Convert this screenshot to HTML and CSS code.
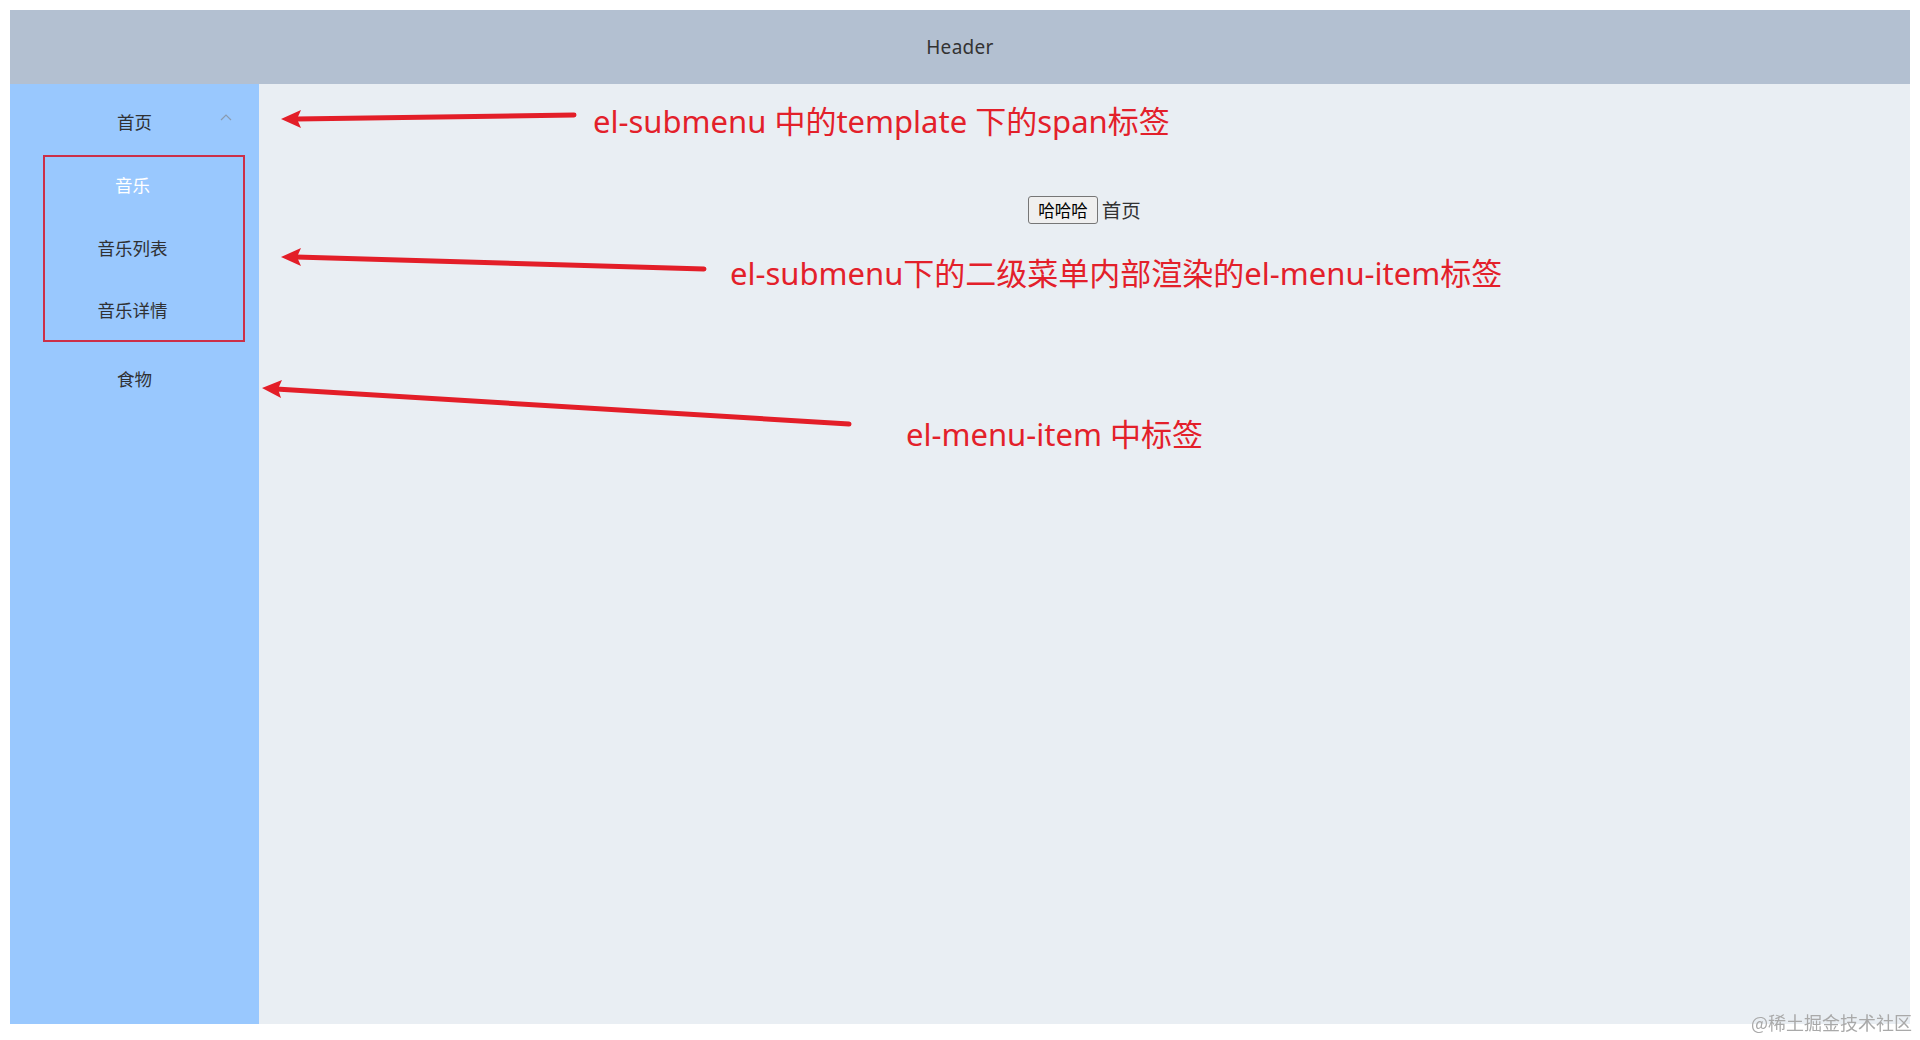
FILE: index.html
```html
<!DOCTYPE html>
<html lang="zh-CN">
<head>
<meta charset="utf-8">
<title>Element layout</title>
<link rel="stylesheet" href="styles.css">
</head>
<body>
<section class="container">
  <header class="header">Header</header>
  <section class="body">
    <aside class="aside">
      <ul class="menu">
        <li class="submenu">
          <div class="submenu-title">
            <span>首页</span>
            <svg class="arrow" width="12" height="8" viewBox="0 0 12 8"><path d="M1 7 L6 2 L11 7" fill="none" stroke="#8a9bb0" stroke-width="1.2"/></svg>
          </div>
          <ul class="submenu-list">
            <li class="item active">音乐</li>
            <li class="item">音乐列表</li>
            <li class="item">音乐详情</li>
          </ul>
        </li>
        <li class="top-item">食物</li>
      </ul>
    </aside>
    <main class="main">
      <button class="btn">哈哈哈</button> <span class="main-text">首页</span>
    </main>
  </section>
</section>

<div class="overlay">
  <svg class="arrows" width="1920" height="1040" viewBox="0 0 1920 1040">
    <g stroke="#e31e28" stroke-width="5" stroke-linecap="round" fill="none">
      <line x1="574" y1="115" x2="296" y2="119"/>
      <line x1="704" y1="269" x2="296" y2="257"/>
      <line x1="849" y1="424" x2="276" y2="389"/>
    </g>
    <g fill="#e31e28">
      <polygon points="281,119 301,110 297,119 301,128"/>
      <polygon points="281,257 301,248 297,257 301,266"/>
      <polygon points="262,388 282,380 278,389 281,398"/>
    </g>
  </svg>
  <div class="mark-box"></div>
  <div class="note note-1">el-submenu 中的template 下的span标签</div>
  <div class="note note-2">el-submenu下的二级菜单内部渲染的el-menu-item标签</div>
  <div class="note note-3">el-menu-item 中标签</div>
</div>
<div class="watermark">@稀土掘金技术社区</div>
</body>
</html>
```

FILE: styles.css
```css
html, body {
  margin: 0;
  padding: 0;
}
body {
  margin: 10px;
  background: #ffffff;
  font-family: "Noto Sans", "Noto Sans CJK SC", sans-serif;
  position: relative;
}
.container {
  display: flex;
  flex-direction: column;
  width: 1900px;
  height: 1014px;
}
.header {
  height: 74px;
  flex: none;
  background: #b3c0d1;
  color: #333333;
  text-align: center;
  line-height: 74px;
  font-size: 19px;
  letter-spacing: 0.3px;
}
.body {
  display: flex;
  flex: 1;
  min-height: 0;
}
.aside {
  width: 249px;
  flex: none;
  background: #99c8fe;
  color: #303133;
}
.menu, .submenu-list {
  list-style: none;
  margin: 0;
  padding: 0;
}
.menu {
  font-family: "Noto Sans CJK SC", sans-serif;
  font-size: 17.5px;
}
.submenu-title {
  height: 70px;
  display: flex;
  align-items: center;
  justify-content: center;
  position: relative;
  padding-top: 4px;
  box-sizing: border-box;
}
.arrow {
  position: absolute;
  right: 27px;
  top: 29px;
}
.item {
  height: 62.5px;
  line-height: 62.5px;
  text-align: center;
  padding-right: 4px;
}
.item.active {
  color: #ffffff;
}
.top-item {
  height: 70px;
  line-height: 74px;
  text-align: center;
}
.main {
  flex: 1;
  background: #e9eef3;
  color: #333333;
  text-align: center;
  padding: 24px 25px 25px;
  line-height: 200px;
  box-sizing: border-box;
}
.btn {
  font-family: "Noto Sans CJK SC", sans-serif;
  font-size: 16.5px;
  height: 28px;
  line-height: 24px;
  padding: 0 9px;
  border: 1px solid #767676;
  border-radius: 3px;
  background: #efefef;
  color: #000;
  vertical-align: middle;
}
.main-text {
  font-family: "Noto Sans CJK SC", sans-serif;
  font-size: 19.5px;
  vertical-align: middle;
}
.overlay {
  position: absolute;
  left: -10px;
  top: -10px;
  width: 1920px;
  height: 1040px;
  pointer-events: none;
}
.arrows {
  position: absolute;
  left: 0;
  top: 0;
}
.mark-box {
  position: absolute;
  left: 43px;
  top: 155px;
  width: 198px;
  height: 183px;
  border: 2px solid #cc2f48;
}
.note {
  position: absolute;
  color: #e3202a;
  font-family: "Noto Sans", "Noto Sans CJK SC", sans-serif;
  font-size: 31px;
  line-height: 40px;
  white-space: nowrap;
}
.note-1 { left: 593px; top: 101px; }
.note-2 { left: 730px; top: 253px; }
.note-3 { left: 906px; top: 414px; }
.watermark {
  position: fixed;
  right: 8px;
  bottom: 6px;
  color: #a9a9a9;
  font-family: "Noto Sans CJK SC", serif;
  font-size: 18px;
  line-height: 24px;
  white-space: nowrap;
}
```
